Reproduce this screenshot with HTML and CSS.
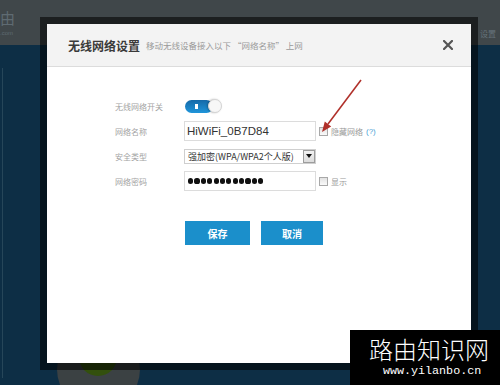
FILE: index.html
```html
<!DOCTYPE html>
<html lang="zh-CN">
<head>
<meta charset="utf-8">
<title>无线网络设置</title>
<link rel="stylesheet" href="styles.css">
</head>
<body>
<div class="page">
  <header class="topbar">
    <div class="logo"><span class="logo-mark">由</span><span class="logo-dom">.com</span></div>
    <div class="top-link">设置</div>
  </header>
  <main class="main">
    <div class="rail"></div>
    <div class="stage">
      <div class="orb"><div class="orb-core"></div></div>
    </div>
  </main>
</div>

<div class="dialog">
  <div class="dlg-head">
    <h2 class="dlg-title">无线网络设置</h2>
    <span class="dlg-sub">移动无线设备接入以下 “网络名称” 上网</span>
    <button class="dlg-close" aria-label="关闭">
      <svg width="10" height="10" viewBox="0 0 10 10"><path d="M1 1 L9 9 M9 1 L1 9" stroke="#555" stroke-width="2.2" stroke-linecap="square"/></svg>
    </button>
  </div>
  <div class="dlg-body">
    <div class="row row-s">
      <span class="lbl">无线网络开关</span>
      <div class="switch"><span class="switch-track"></span><span class="switch-bar"></span><span class="switch-knob"></span></div>
    </div>
    <div class="row row-l">
      <span class="lbl">网络名称</span>
      <div class="field">HiWiFi_0B7D84</div>
      <span class="cb"></span><span class="cb-text">隐藏网络</span><span class="help">(?)</span>
    </div>
    <div class="row row-s">
      <span class="lbl">安全类型</span>
      <div class="select"><span class="select-text">强加密(WPA/WPA2个人版)</span><span class="select-btn"><svg width="6" height="4" viewBox="0 0 6 4"><path d="M0 0 H6 L3 4 Z" fill="#111"/></svg></span></div>
    </div>
    <div class="row row-l">
      <span class="lbl">网络密码</span>
      <div class="field field-pw">
        <span class="dot"></span><span class="dot"></span><span class="dot"></span><span class="dot"></span><span class="dot"></span><span class="dot"></span><span class="dot"></span><span class="dot"></span><span class="dot"></span><span class="dot"></span><span class="dot"></span><span class="dot"></span>
      </div>
      <span class="cb"></span><span class="cb-text">显示</span>
    </div>
    <div class="actions">
      <button class="btn btn-save">保存</button>
      <button class="btn btn-cancel">取消</button>
    </div>
  </div>
</div>

<svg class="arrow" width="47" height="60" viewBox="0 0 47 60">
  <line x1="43" y1="5" x2="10" y2="49" stroke="#b0302a" stroke-width="1.6"/>
  <polygon points="4,57 13.2,51.4 6.8,46.6" fill="#b0302a"/>
</svg>

<div class="wm">
  <div class="wm-title">路由知识网</div>
  <div class="wm-url">www.yilanbo.cn</div>
</div>
</body>
</html>
```

FILE: styles.css
```css
html, body {
  margin: 0;
  padding: 0;
}

body {
  width: 500px;
  height: 385px;
  overflow: hidden;
  position: relative;
  background: #0d2e45;
  font-family: "Noto Sans CJK SC", "Liberation Sans", sans-serif;
}

.page {
  display: flex;
  flex-direction: column;
  height: 385px;
}

.topbar {
  height: 45px;
  flex: none;
  background: #40474a;
  display: flex;
  justify-content: space-between;
  align-items: flex-start;
}

.logo {
  display: flex;
  flex-direction: column;
  padding-top: 9px;
  color: #5f6b72;
}

.logo-mark {
  font-size: 15px;
  line-height: 17px;
}

.logo-dom {
  font-size: 6px;
  line-height: 8px;
  margin-top: 3px;
  font-family: "Liberation Sans", sans-serif;
}

.top-link {
  font-size: 8px;
  color: #66737a;
  margin: 28px 4px 0 0;
}

.main {
  flex: 1;
  display: flex;
  background: #0d2e45;
  overflow: hidden;
}

.rail {
  width: 1px;
  height: 310px;
  margin: 23px 0 0 2px;
  background: #264659;
}

.stage {
  flex: 1;
  min-height: 0;
  overflow: hidden;
}

.orb {
  width: 83px;
  height: 83px;
  border-radius: 50%;
  background: #3b4143;
  margin: 283px 0 0 54px;
  display: flex;
}

.orb-core {
  width: 38px;
  height: 38px;
  border-radius: 50%;
  background: #33500d;
  margin: 10px 0 0 22px;
}

/* dialog */
.dialog {
  position: absolute;
  left: 40px;
  top: 17px;
  width: 424px;
  height: 339px;
  border: 7px solid rgba(0, 0, 0, 0.56);
  background: #fff;
  background-clip: padding-box;
  display: flex;
  flex-direction: column;
}

.dlg-head {
  height: 42px;
  flex: none;
  border-bottom: 1px solid #dcdcdc;
  background: #f3f3f3;
  display: flex;
  align-items: center;
  padding: 0 18px 0 21px;
}

.dlg-title {
  margin: 0;
  font-size: 12px;
  font-weight: 700;
  color: #3a3a3a;
}

.dlg-sub {
  margin-left: 6px;
  font-size: 8.5px;
  color: #9a9a9a;
}

.dlg-close {
  margin-left: auto;
  background: none;
  border: 0;
  padding: 0;
  width: 10px;
  height: 10px;
  display: flex;
}

.dlg-body {
  padding: 31px 0 0 68px;
  display: flex;
  flex-direction: column;
  gap: 7px;
}

.row {
  display: flex;
  align-items: center;
}

.row-s { height: 16px; }
.row-l { height: 20px; }

.lbl {
  width: 69px;
  font-size: 8px;
  color: #a3a3a3;
}

.switch {
  width: 37px;
  height: 13px;
  margin-left: 1px;
  position: relative;
}

.switch-track {
  position: absolute;
  left: 0;
  top: 0;
  width: 28px;
  height: 13px;
  border-radius: 7px;
  background: linear-gradient(#1569a8, #1f95da);
}

.switch-bar {
  position: absolute;
  left: 10px;
  top: 4px;
  width: 3px;
  height: 5px;
  background: #fff;
}

.switch-knob {
  position: absolute;
  left: 23px;
  top: -1px;
  width: 14px;
  height: 14px;
  box-sizing: border-box;
  border-radius: 50%;
  background: #f7f7f7;
  border: 1px solid #d4d4d4;
  box-shadow: -1px 0 2px rgba(0, 0, 0, 0.25);
}

.field {
  width: 132px;
  height: 20px;
  box-sizing: border-box;
  border: 1px solid #dcdcdc;
  display: flex;
  align-items: center;
  padding-left: 2px;
  font-family: "Liberation Sans", sans-serif;
  font-size: 11.5px;
  color: #333;
}

.field-pw {
  gap: 1.2px;
  padding-left: 3px;
}

.dot {
  width: 5.2px;
  height: 5.2px;
  border-radius: 50%;
  background: #111;
}

.select {
  width: 132px;
  height: 15px;
  box-sizing: border-box;
  border: 1px solid #cfcfcf;
  display: flex;
  align-items: center;
  padding-left: 3px;
  font-size: 9px;
  color: #333;
}

.select-text {
  flex: 1;
  white-space: nowrap;
}

.select-btn {
  width: 12px;
  height: 13px;
  box-sizing: border-box;
  border: 1px solid #9d9d9d;
  background: linear-gradient(#f2f2f2, #dcdcdc);
  display: flex;
  align-items: center;
  justify-content: center;
}

.cb {
  width: 9px;
  height: 9px;
  box-sizing: border-box;
  border: 1px solid #a8a8a8;
  background: linear-gradient(#e2e2e2, #fafafa);
  margin-left: 3px;
}

.cb-text {
  font-size: 8px;
  color: #999;
  margin-left: 3px;
}

.help {
  font-size: 8px;
  color: #4a9fd5;
  margin-left: 3px;
  font-family: "Liberation Sans", sans-serif;
}

.actions {
  display: flex;
  gap: 11px;
  margin: 23px 0 0 70px;
}

.btn {
  height: 24px;
  border: 0;
  padding: 0;
  background: #1b8fcb;
  color: #fff;
  font-family: "Noto Sans CJK SC", sans-serif;
  font-size: 10px;
  font-weight: 700;
}

.btn-save { width: 65px; }
.btn-cancel { width: 62px; }

.arrow {
  position: absolute;
  left: 318px;
  top: 75px;
}

.wm {
  position: absolute;
  right: 0;
  bottom: 0;
  width: 150px;
  height: 55px;
  box-sizing: border-box;
  padding-left: 19px;
  background: #000;
  color: #fff;
  display: flex;
  flex-direction: column;
}

.wm-title {
  font-size: 24px;
  line-height: 24px;
  margin-top: 7px;
  font-weight: 300;
}

.wm-url {
  font-family: "Liberation Mono", monospace;
  font-size: 11.7px;
  line-height: 13px;
  margin-left: 14px;
  margin-top: 4px;
}
```
